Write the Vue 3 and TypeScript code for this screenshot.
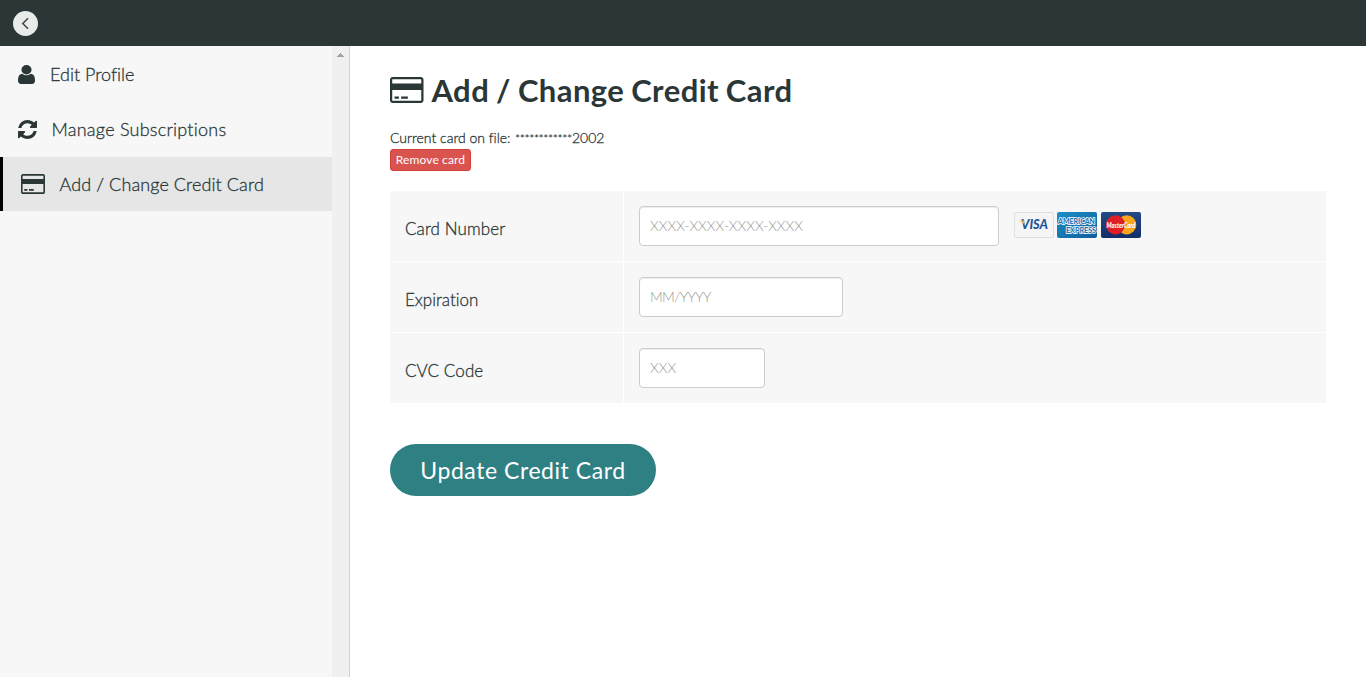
<script setup lang="ts">
interface Shape {
  box: string
  path: string
}

interface NavItem {
  key: string
  label: string
  icon: Shape
  active: boolean
}

interface Field {
  key: string
  label: string
  placeholder: string
}

const creditCard: Shape = {
  box: '0 128 1920 1536',
  path: 'M1760 128q66 0 113 47t47 113v1216q0 66-47 113t-113 47h-1600q-66 0-113-47t-47-113v-1216q0-66 47-113t113-47h1600zm-1600 128q-13 0-22.5 9.5t-9.5 22.5v224h1664v-224q0-13-9.5-22.5t-22.5-9.5h-1600zm1600 1280q13 0 22.5-9.5t9.5-22.5v-608h-1664v608q0 13 9.5 22.5t22.5 9.5h1600zm-1504-128v-128h256v128h-256zm384 0v-128h384v128h-384z',
}

const user: Shape = {
  box: '0 128 1280 1536',
  path: 'M1280 1399q0 109-62.5 187t-150.5 78h-854q-88 0-150.5-78t-62.5-187q0-85 8.5-160.5t31.5-152 58.5-131 94-89 134.5-34.5q131 128 313 128t313-128q76 0 134.5 34.5t94 89 58.5 131 31.5 152 8.5 160.5zm-256-887q0 159-112.5 271.5t-271.5 112.5-271.5-112.5-112.5-271.5 112.5-271.5 271.5-112.5 271.5 112.5 112.5 271.5z',
}

const refresh: Shape = {
  box: '128 128 1536 1536',
  path: 'M1639 1056q0 5-1 7-64 268-268 434.5t-478 166.5q-146 0-282.5-55t-243.5-157l-129 129q-19 19-45 19t-45-19-19-45v-448q0-26 19-45t45-19h448q26 0 45 19t19 45-19 45l-137 137q71 66 161 102t187 36q134 0 250-65t186-179q11-17 53-117 8-23 30-23h192q13 0 22.5 9.5t9.5 22.5zm25-800v448q0 26-19 45t-45 19h-448q-26 0-45-19t-19-45 19-45l138-138q-148-137-349-137-134 0-250 65t-186 179q-11 17-53 117-8 23-30 23h-199q-13 0-22.5-9.5t-9.5-22.5v-7q65-268 270-434.5t480-166.5q146 0 284 55.5t245 156.5l130-129q19-19 45-19t45 19 19 45z',
}

const nav: NavItem[] = [
  { key: 'profile', label: 'Edit Profile', icon: user, active: false },
  { key: 'subscriptions', label: 'Manage Subscriptions', icon: refresh, active: false },
  { key: 'card', label: 'Add / Change Credit Card', icon: creditCard, active: true },
]

const fields: Field[] = [
  { key: 'number', label: 'Card Number', placeholder: 'XXXX-XXXX-XXXX-XXXX' },
  { key: 'expiration', label: 'Expiration', placeholder: 'MM/YYYY' },
  { key: 'cvc', label: 'CVC Code', placeholder: 'XXX' },
]
</script>

<template>
  <div class="page">
    <header class="topbar">
      <button class="back" aria-label="Back">
        <svg viewBox="0 0 25 25" width="25" height="25">
          <path d="M15 7.2 9.8 12.5 15 17.8" fill="none" stroke="#3a4545" stroke-width="1.5" />
        </svg>
      </button>
    </header>
    <div class="body">
      <aside class="sidebar">
        <nav class="menu">
          <a v-for="item in nav" :key="item.key" class="item" :class="[item.key, { active: item.active }]">
            <svg class="glyph" :viewBox="item.icon.box" preserveAspectRatio="none">
              <path :d="item.icon.path" fill="currentColor" />
            </svg>
            <span class="label">{{ item.label }}</span>
          </a>
        </nav>
        <div class="scrollbar">
          <svg viewBox="0 0 7 4" width="7" height="4" shape-rendering="crispEdges">
            <path d="M3 0h1v1h1v1h1v1h1v1H0V3h1V2h1V1h1z" fill="#a3a3a3" />
          </svg>
        </div>
      </aside>
      <main class="content">
        <h1 class="title">
          <svg class="title-icon" :viewBox="creditCard.box" preserveAspectRatio="none">
            <path :d="creditCard.path" fill="currentColor" />
          </svg>
          <span>Add / Change Credit Card</span>
        </h1>
        <div class="on-file"><span class="file-label">Current card on file:</span><span class="stars">************</span><span class="digits">2002</span></div>
        <button class="remove">Remove card</button>
        <div class="form">
          <div v-for="field in fields" :key="field.key" class="row">
            <label class="name" :class="'name-' + field.key">{{ field.label }}</label>
            <div class="value">
              <input type="text" :class="'input-' + field.key" :placeholder="field.placeholder" />
              <div v-if="field.key === 'number'" class="brands">
                <svg viewBox="0 0 40 26" width="40" height="26">
                  <rect x=".5" y=".5" width="39" height="25" rx="1.5" fill="#f5f5f5" stroke="#dfdfdf" />
                  <text x="7" y="17.4" class="visa" textLength="27" lengthAdjust="spacingAndGlyphs">VISA</text>
                  <path d="M5.500 8.500h4.200l1 4.500C9.500 11.200 7.500 9.600 5.500 9z" fill="#f2b13a" />
                </svg>
                <svg viewBox="0 0 40 26" width="40" height="26">
                  <defs>
                    <linearGradient id="amex" x1="0" y1="0" x2="1" y2="1">
                      <stop offset="0" stop-color="#1c8fc6" />
                      <stop offset="1" stop-color="#0f5f9c" />
                    </linearGradient>
                  </defs>
                  <rect width="40" height="26" rx="2" fill="url(#amex)" />
                  <text x="1" y="12" class="amex" textLength="37" lengthAdjust="spacingAndGlyphs">AMERICAN</text>
                  <text x="9" y="20.500" class="amex" textLength="30" lengthAdjust="spacingAndGlyphs">EXPRESS</text>
                </svg>
                <svg viewBox="0 0 40 26" width="40" height="26">
                  <defs>
                    <linearGradient id="navy" x1="0" y1="0" x2="0" y2="1">
                      <stop offset="0" stop-color="#234a87" />
                      <stop offset="1" stop-color="#122e66" />
                    </linearGradient>
                  </defs>
                  <rect width="40" height="26" rx="2" fill="url(#navy)" />
                  <circle cx="25.700" cy="12.800" r="9.600" fill="#f8a51b" />
                  <circle cx="14.500" cy="12.800" r="9.600" fill="#e01e26" />
                  <text x="5.500" y="15.600" class="master" textLength="29" lengthAdjust="spacingAndGlyphs">MasterCard</text>
                </svg>
              </div>
            </div>
          </div>
        </div>
        <button class="update">Update Credit Card</button>
      </main>
    </div>
  </div>
</template>

<style>
body {
  margin: 0;
  overflow: hidden;
}
</style>

<style scoped>
.page {
  width: 100%;
  height: 100vh;
  display: flex;
  flex-direction: column;
  overflow: hidden;
  background: #fff;
  color: #2b3737;
  font-family: Lato, "Open Sans", sans-serif;
  font-weight: 300;
  font-variant-ligatures: none;
}
button,
input {
  font-family: inherit;
  box-sizing: border-box;
  margin: 0;
}
.topbar {
  box-sizing: border-box;
  height: 46px;
  flex: none;
  padding: 11px 13px;
  background: #2b3737;
}
.back {
  display: block;
  width: 25px;
  height: 25px;
  padding: 0;
  border: 0;
  border-radius: 50%;
  background: #e9ebeb;
}
.back svg,
.brands svg {
  display: block;
}
.body {
  flex: 1;
  display: flex;
  min-height: 0;
}
.sidebar {
  box-sizing: border-box;
  width: 350px;
  flex: none;
  display: flex;
  border-right: 1px solid #d2d2d2;
  background: #f7f7f7;
}
.menu {
  flex: 1;
  padding-top: 1px;
}
.item {
  box-sizing: border-box;
  height: 54px;
  margin-bottom: 1px;
  padding-left: 18px;
  display: flex;
  align-items: center;
  font-size: 18px;
  white-space: nowrap;
}
.item.active {
  background: #e6e6e6;
  border-left: 3px solid #000;
}
.label,
.name,
.file-label,
.digits {
  -webkit-text-stroke: 0.3px currentColor;
}
.glyph {
  flex: none;
  width: 19px;
  height: 19px;
  margin-right: 14.5px;
}
.profile .glyph {
  width: 17px;
  margin-right: 15px;
}
.subscriptions .label {
  letter-spacing: 0.24px;
}
.card .glyph {
  width: 24px;
  height: 20px;
}
.card .label {
  letter-spacing: 0.1px;
}
.scrollbar {
  width: 17px;
  flex: none;
  display: flex;
  justify-content: center;
  padding-top: 7px;
  background: #f0f0f0;
}
.content {
  flex: 1;
  padding: 27px 40px 0;
}
.title {
  display: flex;
  align-items: center;
  height: 34px;
  margin: 0 0 20px;
  font-size: 31px;
  font-weight: 700;
  line-height: 34px;
  letter-spacing: 0.42px;
  word-spacing: -1px;
  white-space: nowrap;
}
.title-icon {
  width: 33.5px;
  height: 26px;
  margin-right: 8px;
}
.on-file {
  display: flex;
  height: 22px;
  line-height: 22px;
  font-size: 14px;
  white-space: nowrap;
}
.file-label {
  width: 125px;
}
.stars {
  width: 57px;
  padding-top: 1px;
  font-size: 12px;
  font-weight: 400;
  letter-spacing: -0.38px;
}
.remove {
  display: block;
  width: 81px;
  height: 22px;
  padding: 0;
  border: 1px solid #d43f3a;
  border-radius: 3px;
  background: #d9534f;
  color: #fff;
  font-size: 12px;
  line-height: 18px;
  letter-spacing: 0.12px;
}
.form {
  margin-top: 20px;
  display: grid;
  gap: 1px;
}
.row {
  height: 70px;
  display: grid;
  grid-template-columns: 233px 1fr;
  gap: 1px;
}
.name,
.value {
  display: flex;
  align-items: center;
  padding-left: 15px;
  background: #f7f7f7;
}
.name {
  padding-top: 4px;
  font-size: 17px;
  letter-spacing: 0.1px;
}
.name-expiration {
  letter-spacing: 0;
}
input {
  height: 40px;
  padding: 0 10px 1px;
  border: 1px solid #ccc;
  border-radius: 4px;
  background: #fff;
  box-shadow: inset 0 1px 1px rgba(0, 0, 0, 0.075);
  font-size: 14px;
  font-weight: 300;
}
input::placeholder {
  color: #999;
  opacity: 1;
}
.input-number {
  width: 360px;
}
.input-expiration {
  width: 204px;
  letter-spacing: -0.6px;
}
.input-cvc {
  width: 126px;
}
.brands {
  display: flex;
  gap: 4px;
  margin: 0 0 3px 15px;
}
.brands svg:first-child {
  margin-right: -1px;
}
.visa {
  font: italic 900 13px Lato, sans-serif;
  fill: #1f5799;
}
.amex {
  font: 900 7px Lato, sans-serif;
  fill: #1a78b4;
  stroke: #fff;
  stroke-width: 1.4px;
  paint-order: stroke;
}
.master {
  font: italic 900 7px Lato, sans-serif;
  fill: #fff;
}
.update {
  display: block;
  width: 266px;
  height: 52px;
  margin-top: 41px;
  padding: 0 0 1px;
  border: 0;
  border-radius: 26px;
  background: #2f8083;
  color: #fff;
  font-size: 23px;
  letter-spacing: 0.56px;
}
</style>
